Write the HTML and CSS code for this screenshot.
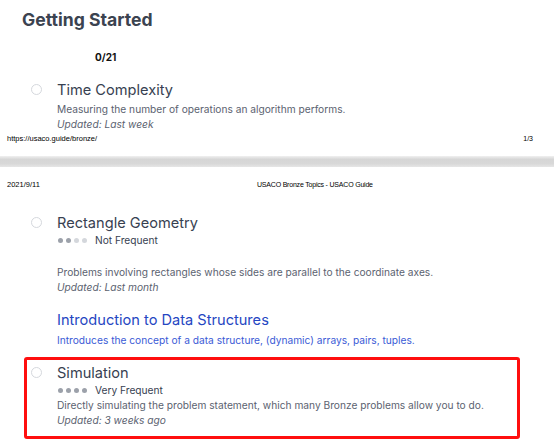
FILE: index.html
```html
<!DOCTYPE html>
<html>
<head>
<meta charset="utf-8">
<link rel="stylesheet" href="styles.css">
</head>
<body>
<div class="sheet sheet-one">
  <h1 class="section-title">Getting Started</h1>
  <div class="progress">0/21</div>
  <div class="module">
    <span class="check"></span>
    <div class="module-body">
      <div class="module-title">Time Complexity</div>
      <p class="module-desc">Measuring the number of operations an algorithm performs.</p>
      <p class="module-updated">Updated: Last week</p>
    </div>
  </div>
  <div class="print-foot"><span>https://usaco.guide/bronze/</span><span>1/3</span></div>
</div>
<div class="sheet-gap"></div>
<div class="sheet sheet-two">
  <div class="print-head"><span>2021/9/11</span><span>USACO Bronze Topics - USACO Guide</span></div>
  <div class="module module-rect">
    <span class="check"></span>
    <div class="module-body">
      <div class="module-title">Rectangle Geometry</div>
      <div class="freq"><span class="dot on"></span><span class="dot on"></span><span class="dot"></span><span class="dot"></span><span class="freq-label">Not Frequent</span></div>
      <p class="module-desc spaced">Problems involving rectangles whose sides are parallel to the coordinate axes.</p>
      <p class="module-updated">Updated: Last month</p>
    </div>
  </div>
  <div class="module module-link">
    <div class="module-body">
      <div class="module-title link">Introduction to Data Structures</div>
      <p class="module-desc link-desc">Introduces the concept of a data structure, (dynamic) arrays, pairs, tuples.</p>
    </div>
  </div>
  <div class="highlight">
    <div class="module">
      <span class="check"></span>
      <div class="module-body">
        <div class="module-title">Simulation</div>
        <div class="freq"><span class="dot on"></span><span class="dot on"></span><span class="dot on"></span><span class="dot on"></span><span class="freq-label">Very Frequent</span></div>
        <p class="module-desc">Directly simulating the problem statement, which many Bronze problems allow you to do.</p>
        <p class="module-updated">Updated: 3 weeks ago</p>
      </div>
    </div>
  </div>
</div>
</body>
</html>
```
FILE: styles.css
```css
* { box-sizing: border-box; }
html, body { margin: 0; padding: 0; background: #fff; }
body {
  width: 554px;
  height: 441px;
  overflow: hidden;
  font-family: Inter, "Noto Sans", sans-serif;
  color: #374151;
}
p { margin: 0; }

.sheet-one { padding-top: 9px; }

.section-title {
  margin: 0 0 0 22px;
  font-size: 17.6px;
  line-height: 22px;
  font-weight: 700;
  color: #3b4350;
}

.progress {
  margin: 20px 0 0 95px;
  font-size: 10px;
  line-height: 12px;
  font-weight: 700;
  color: #111;
}

.module {
  display: flex;
  align-items: flex-start;
  padding-left: 31px;
  gap: 15px;
}
.sheet-one .module { margin-top: 16px; }

.check {
  flex: none;
  width: 11px;
  height: 11px;
  margin-top: 5px;
  border: 1px solid #d5d8dd;
  border-radius: 50%;
}

.module-title {
  font-size: 14.6px;
  line-height: 22px;
  color: #374151;
}
.module-desc {
  margin-top: 1px;
  font-size: 10.2px;
  line-height: 15px;
  color: #5b6270;
}
.module-updated {
  font-size: 10.2px;
  line-height: 15px;
  font-style: italic;
  color: #5b6270;
}

.print-foot {
  display: flex;
  justify-content: space-between;
  padding: 2px 21px 0 7px;
  font-family: "Liberation Sans", Arial, sans-serif;
  font-size: 7.5px;
  line-height: 9px;
  color: #000;
}
.print-foot span:last-child { font-size: 7px; }

.sheet-gap {
  height: 11px;
  margin-top: 13px;
  background: linear-gradient(#f0f0f0, #d6d6d6 30%, #d8d8d8 70%, #e6e6e6);
}

.print-head {
  display: grid;
  grid-template-columns: 250px auto;
  padding: 13px 0 0 7px;
  font-family: "Liberation Sans", Arial, sans-serif;
  font-size: 7px;
  line-height: 9px;
  color: #000;
}
.print-head span:first-child { font-size: 7.5px; }
.print-head span:last-child { letter-spacing: -0.2px; }

.module-rect { margin-top: 23px; }

.freq {
  display: flex;
  align-items: center;
  gap: 3px;
  margin-top: -1px;
  padding-left: 1px;
  font-size: 10.2px;
  line-height: 14px;
  color: #374151;
}
.dot {
  width: 5px;
  height: 5px;
  border-radius: 50%;
  background: #d4d7dc;
}
.dot.on { background: #9ca1aa; }
.freq-label { margin-left: 5px; }

.module-desc.spaced { margin-top: 18px; }

.module-link { margin-top: 14px; padding-left: 57px; }
.module-title.link { color: #2546c2; }
.module-desc.link-desc { color: #3a5ad6; margin-top: 2px; }

.highlight {
  margin: 9px 34px 0 24px;
  height: 82px;
  border: 3px solid #ff0f0f;
  border-radius: 3px;
  padding-top: 2px;
}
.highlight .module { padding-left: 4px; }
```
